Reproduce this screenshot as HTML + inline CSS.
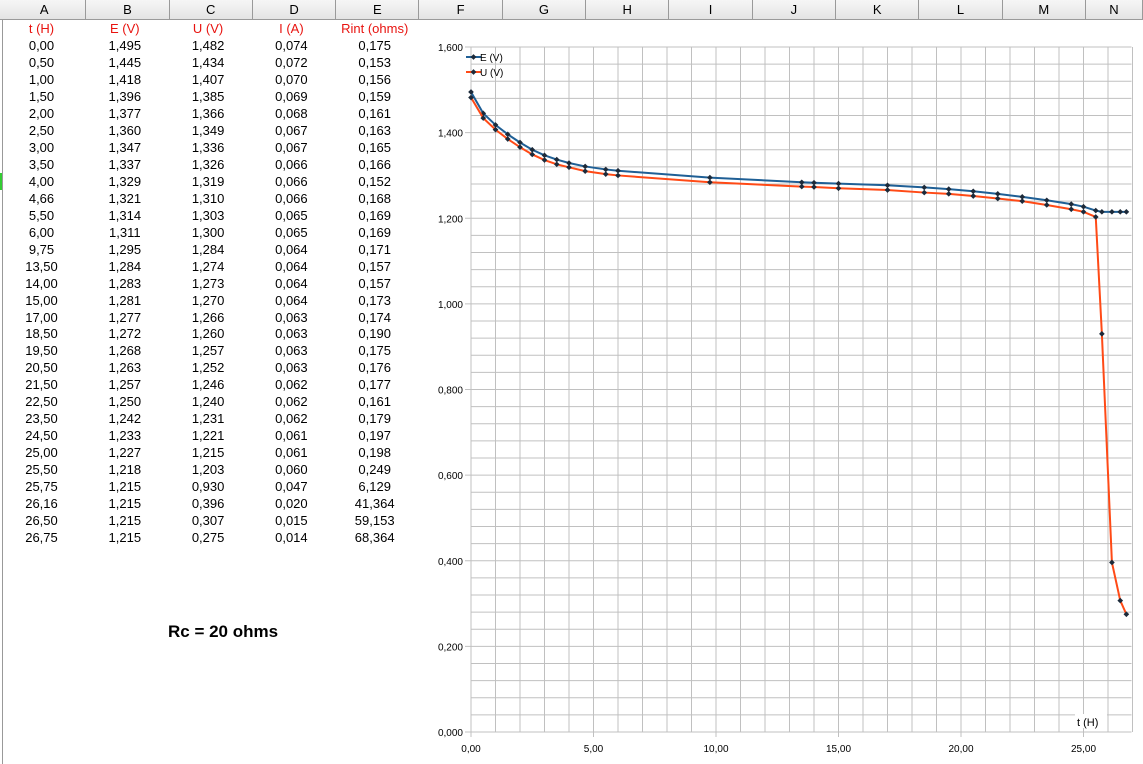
<!DOCTYPE html>
<html><head><meta charset="utf-8"><style>
body{margin:0;width:1143px;height:764px;background:#fff;font-family:"Liberation Sans",Arial,sans-serif;overflow:hidden;position:relative}
#hdr{position:absolute;left:0;top:0;width:1143px;height:19px;background:linear-gradient(#f6f6f6,#e4e4e4);border-bottom:1px solid #9a9a9a}
.h{position:absolute;top:0;height:19px;line-height:20px;text-align:center;font-size:13px;border-right:1px solid #9a9a9a;box-sizing:border-box}
.c{position:absolute;text-align:center;font-size:13px;width:83px;height:17px;line-height:17px}
.red{color:#e8130f}
#rownum{position:absolute;left:0;top:20px;width:2px;height:744px;border-right:1px solid #999}
</style></head><body>
<div id="hdr"></div><div id="rownum"></div>
<div style="position:absolute;left:0;top:173px;width:2px;height:17px;background:#3c3"></div>
<div style="position:absolute;left:168px;top:622px;font-size:17px;font-weight:bold">Rc = 20 ohms</div>
<svg id="ch" width="1143" height="764" style="position:absolute;left:0;top:0"></svg>
<script>
var cols="ABCDEFGHIJKLMN".split(""),w=83.3,b=document.body,h="";
for(var i=0;i<14;i++){var l=3+i*w,ww=(i==13?1143-l:w);h+='<div class="h" style="left:'+l+'px;width:'+ww+'px">'+cols[i]+'</div>';}
var d=[["0,00","1,495","1,482","0,074","0,175"],["0,50","1,445","1,434","0,072","0,153"],["1,00","1,418","1,407","0,070","0,156"],["1,50","1,396","1,385","0,069","0,159"],["2,00","1,377","1,366","0,068","0,161"],["2,50","1,360","1,349","0,067","0,163"],["3,00","1,347","1,336","0,067","0,165"],["3,50","1,337","1,326","0,066","0,166"],["4,00","1,329","1,319","0,066","0,152"],["4,66","1,321","1,310","0,066","0,168"],["5,50","1,314","1,303","0,065","0,169"],["6,00","1,311","1,300","0,065","0,169"],["9,75","1,295","1,284","0,064","0,171"],["13,50","1,284","1,274","0,064","0,157"],["14,00","1,283","1,273","0,064","0,157"],["15,00","1,281","1,270","0,064","0,173"],["17,00","1,277","1,266","0,063","0,174"],["18,50","1,272","1,260","0,063","0,190"],["19,50","1,268","1,257","0,063","0,175"],["20,50","1,263","1,252","0,063","0,176"],["21,50","1,257","1,246","0,062","0,177"],["22,50","1,250","1,240","0,062","0,161"],["23,50","1,242","1,231","0,062","0,179"],["24,50","1,233","1,221","0,061","0,197"],["25,00","1,227","1,215","0,061","0,198"],["25,50","1,218","1,203","0,060","0,249"],["25,75","1,215","0,930","0,047","6,129"],["26,16","1,215","0,396","0,020","41,364"],["26,50","1,215","0,307","0,015","59,153"],["26,75","1,215","0,275","0,014","68,364"]];
var hd=["t (H)","E (V)","U (V)","I (A)","Rint (ohms)"];
for(var j=0;j<5;j++)h+='<div class="c red" style="left:'+(j*w)+'px;top:20px">'+hd[j]+'</div>';
for(var r=0;r<d.length;r++)for(var j=0;j<5;j++)h+='<div class="c" style="left:'+(j*w)+'px;top:'+(37+r*16.97)+'px">'+d[r][j]+'</div>';
b.insertAdjacentHTML('beforeend',h);
var X=function(t){return 471+t*24.5},Y=function(v){return 732-v*428.125},s="";
for(var k=0;k<=40;k++){var y=Y(k*0.04);s+='<line x1="'+(k%5==0?465:471)+'" x2="1131.5" y1="'+y+'" y2="'+y+'" stroke="#c0c0c0"/>';}
for(var k=0;k<=27;k++){var x=X(k);s+='<line x1="'+x+'" x2="'+x+'" y1="47" y2="'+(k%5==0?737:732)+'" stroke="#c0c0c0"/>';}
for(var k=0;k<=8;k++)s+='<text x="463" y="'+(Y(k*0.2)+4)+'" font-size="10" text-anchor="end">'+(k*0.2).toFixed(3).replace(".",",")+'</text>';
for(var k=0;k<=5;k++)s+='<text x="'+X(k*5)+'" y="752" font-size="10" text-anchor="middle">'+(k*5).toFixed(2).replace(".",",")+'</text>';
s+='<rect x="1075" y="714" width="32" height="14" fill="#fff"/><text x="1077" y="726" font-size="11">t (H)</text>';
function ser(ci,col){var p=d.map(function(r){return X(parseFloat(r[0].replace(",",".")))+","+Y(parseFloat(r[ci].replace(",",".")))}).join(" ");
var o='<polyline points="'+p+'" fill="none" stroke="'+col+'" stroke-width="2"/>';
p.split(" ").forEach(function(q){var a=q.split(",");o+='<rect x="'+(a[0]-2)+'" y="'+(a[1]-2)+'" width="4" height="4" fill="#1c2a3a" transform="rotate(45 '+a[0]+' '+a[1]+')"/>';});return o;}
s+=ser(1,"#1f5f95")+ser(2,"#ff4a16");
s+='<line x1="466" x2="481" y1="57" y2="57" stroke="#1f5f95" stroke-width="2"/><rect x="471.5" y="55" width="4" height="4" fill="#1c2a3a" transform="rotate(45 473.5 57)"/><text x="480" y="61" font-size="10">E (V)</text>';
s+='<line x1="466" x2="481" y1="72" y2="72" stroke="#ff4a16" stroke-width="2"/><rect x="471.5" y="70" width="4" height="4" fill="#1c2a3a" transform="rotate(45 473.5 72)"/><text x="480" y="76" font-size="10">U (V)</text>';
document.getElementById("ch").innerHTML=s;
</script>
</body></html>
